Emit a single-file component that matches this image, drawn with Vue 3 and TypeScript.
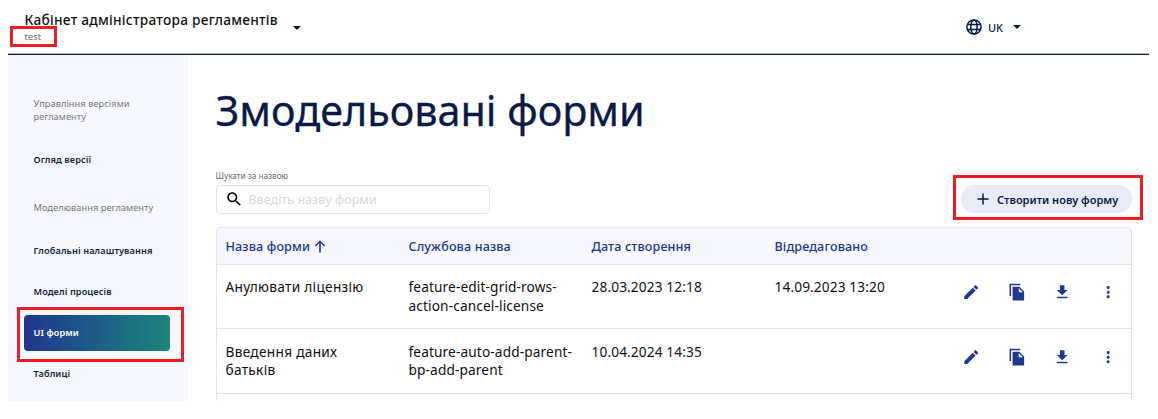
<script setup lang="ts">
interface NavItem {
  label: string
  kind: 'caption' | 'link' | 'active'
  key: string
}

interface FormRow {
  title: string
  name: string
  created: string
  edited: string
}

const nav: NavItem[] = [
  { label: 'Управління версіями регламенту', kind: 'caption', key: 'versions' },
  { label: 'Огляд версії', kind: 'link', key: 'overview' },
  { label: 'Моделювання регламенту', kind: 'caption', key: 'modeling' },
  { label: 'Глобальні налаштування', kind: 'link', key: 'settings' },
  { label: 'Моделі процесів', kind: 'link', key: 'processes' },
  { label: 'UI форми', kind: 'active', key: 'forms' },
  { label: 'Таблиці', kind: 'link', key: 'tables' },
]

const columns: string[] = ['Назва форми', 'Службова назва', 'Дата створення', 'Відредаговано']

const rows: FormRow[] = [
  {
    title: 'Анулювати ліцензію',
    name: 'feature-edit-grid-rows-action-cancel-license',
    created: '28.03.2023 12:18',
    edited: '14.09.2023 13:20',
  },
  {
    title: 'Введення даних батьків',
    name: 'feature-auto-add-parent-bp-add-parent',
    created: '10.04.2024 14:35',
    edited: '',
  },
]

const actions: { id: string; path: string }[] = [
  {
    id: 'edit',
    path: 'M3 17.25V21h3.75L17.81 9.94l-3.75-3.75L3 17.25zM20.71 7.04c.39-.39.39-1.02 0-1.41l-2.34-2.34c-.39-.39-1.02-.39-1.41 0l-1.83 1.83 3.75 3.75 1.83-1.83z',
  },
  {
    id: 'copy',
    path: 'M16 1H2v16h2V3h12V1zm-1 4l6 6v12H6V5h9zm-1 7h5.5L14 6.5V12z',
  },
  { id: 'download', path: 'M19 9h-4V3H9v6H5l7 7 7-7zM5 18v2h14v-2H5z' },
  {
    id: 'more',
    path: 'M12 8c1.1 0 2-.9 2-2s-.9-2-2-2-2 .9-2 2 .9 2 2 2zm0 2c-1.1 0-2 .9-2 2s.9 2 2 2 2-.9 2-2-.9-2-2-2zm0 6c-1.1 0-2 .9-2 2s.9 2 2 2 2-.9 2-2-.9-2-2-2z',
  },
]
</script>

<template>
  <div class="page">
    <header class="top">
      <div class="brand">
        <div class="brand-title">Кабінет адміністратора регламентів</div>
        <div class="brand-sub">test<span class="mark mark-test"></span></div>
      </div>
      <svg class="caret" viewBox="0 0 8 4"><path d="M0 0h8L4 4z" /></svg>
      <div class="lang">
        <svg class="globe" viewBox="0 0 16 16">
          <circle cx="8" cy="8" r="7.1" />
          <ellipse cx="8" cy="8" rx="3.2" ry="7.1" />
          <path d="M1.5 5.6h13M1.5 10.4h13" />
        </svg>
        <span>UK</span>
        <svg class="caret lang-caret" viewBox="0 0 8 4"><path d="M0 0h8L4 4z" /></svg>
      </div>
    </header>

    <div class="body">
      <nav class="side">
        <div v-for="item in nav" :key="item.key" :class="['nav', item.kind, 'nav-' + item.key]">
          {{ item.label }}<span v-if="item.kind === 'active'" class="mark mark-nav"></span>
        </div>
      </nav>

      <main class="main">
        <h1>Змодельовані форми</h1>
        <div class="tools">
          <div class="search">
            <div class="search-label">Шукати за назвою</div>
            <div class="search-box">
              <svg class="icon" viewBox="0 0 24 24">
                <path d="M15.5 14h-.79l-.28-.27C15.41 12.59 16 11.11 16 9.5 16 5.91 13.09 3 9.5 3S3 5.91 3 9.5 5.91 16 9.5 16c1.61 0 3.09-.59 4.23-1.57l.27.28v.79l5 4.99L20.49 19l-4.99-5zm-6 0C7.01 14 5 11.99 5 9.5S7.01 5 9.5 5 14 7.01 14 9.5 11.99 14 9.5 14z" />
              </svg>
              <span>Введіть назву форми</span>
            </div>
          </div>
          <div class="create">
            <svg viewBox="0 0 12 12"><path d="M6 .5v11M.5 6h11" /></svg>
            <span>Створити нову форму</span>
            <span class="mark mark-create"></span>
          </div>
        </div>

        <div class="table">
          <div class="row head">
            <div v-for="(column, i) in columns" :key="column" class="cell">
              <span>{{ column }}</span>
              <svg v-if="i === 0" class="sort" viewBox="0 0 12 13"><path d="M6 12.5V1.4M1.3 6L6 1.3 10.7 6" /></svg>
            </div>
          </div>
          <div v-for="row in rows" :key="row.name" class="row item">
            <div class="cell title">{{ row.title }}</div>
            <div class="cell">{{ row.name }}</div>
            <div class="cell">{{ row.created }}</div>
            <div class="cell">{{ row.edited }}</div>
            <div class="actions">
              <svg v-for="action in actions" :key="action.id" class="icon" viewBox="0 0 24 24">
                <path fill-rule="evenodd" :d="action.path" />
              </svg>
            </div>
          </div>
        </div>
      </main>
    </div>
  </div>
</template>

<style>
body {
  background: #fff;
  overflow: hidden;
}
</style>

<style scoped>
.page {
  box-sizing: border-box;
  width: 1141px;
  height: 401px;
  margin-left: 8px;
  overflow: hidden;
  display: flex;
  flex-direction: column;
  font-family: 'Noto Sans', 'Open Sans', sans-serif;
  color: #111;
}
.top {
  box-sizing: border-box;
  flex: none;
  height: 55px;
  border-bottom: 1px solid #0a1a45;
  box-shadow: inset 0 -1px #b5b9cc;
  display: flex;
  padding-left: 16.5px;
}
.brand {
  width: 253px;
  white-space: nowrap;
}
.brand-title {
  margin-top: 10px;
  font-size: 13.7px;
  font-weight: 500;
  line-height: 20px;
  letter-spacing: 0.26px;
}
.brand-sub {
  position: relative;
  font-size: 9.2px;
  line-height: 14px;
  color: #6b6b6b;
  letter-spacing: 0.15px;
}
.caret {
  width: 8px;
  height: 4px;
  margin: 25.5px 0 0 15px;
  fill: #111;
}
.lang {
  display: flex;
  align-items: center;
  height: 54px;
  margin-left: 665.5px;
  font-size: 11px;
  font-weight: 500;
  color: #0a1a45;
}
.lang span {
  margin-left: 6px;
}
.globe {
  width: 16px;
  height: 16px;
  fill: none;
  stroke: #0a1a45;
  stroke-width: 1.5;
}
.lang-caret {
  margin: 0 0 0 10px;
  fill: #0a1a45;
}
.mark {
  position: absolute;
  box-sizing: border-box;
  border: 3px solid #ee1c24;
}
.mark-test {
  left: -14.5px;
  top: -4px;
  width: 47px;
  height: 21px;
}
.mark-nav {
  left: -7px;
  top: -8px;
  width: 167px;
  height: 55px;
}
.mark-create {
  left: -8px;
  top: -10px;
  width: 190px;
  height: 45px;
}
.body {
  flex: 1;
  display: flex;
  min-height: 0;
}
.side {
  flex: none;
  box-sizing: border-box;
  width: 180px;
  padding: 42px 16px 0;
  background: #f6f8fd;
}
.nav {
  box-sizing: border-box;
  padding: 0 9.5px;
  font-size: 9.2px;
  line-height: 13.3px;
  letter-spacing: 0.1px;
  white-space: nowrap;
}
.caption {
  color: #777;
  letter-spacing: 0.08px;
}
.link {
  font-weight: 600;
  color: #17233f;
}
.nav-versions {
  white-space: normal;
  padding-right: 30px;
}
.nav-overview {
  margin-top: 29px;
}
.nav-modeling {
  margin-top: 35.5px;
}
.nav-settings {
  margin-top: 29.5px;
}
.nav-processes {
  margin-top: 27.7px;
}
.active {
  position: relative;
  width: 146px;
  height: 36px;
  margin-top: 16.5px;
  border-radius: 4px;
  line-height: 36px;
  font-weight: 600;
  color: #fff;
  background: linear-gradient(90deg, #203690, #1b857c);
}
.nav-tables {
  margin-top: 16.5px;
}
.main {
  width: 916.5px;
  margin-left: 27.5px;
}
h1 {
  margin: 23.5px 0 0;
  height: 63.5px;
  font-size: 41.3px;
  line-height: 62px;
  font-weight: 400;
  -webkit-text-stroke: 0.3px #0a1a45;
  color: #0a1a45;
  white-space: nowrap;
}
.tools {
  display: flex;
  justify-content: space-between;
  margin-top: 27px;
}
.search {
  width: 274.5px;
}
.search-label {
  font-size: 8.2px;
  line-height: 13px;
  color: #6b6b6b;
}
.search-box {
  box-sizing: border-box;
  display: flex;
  align-items: center;
  height: 29px;
  margin-top: 3px;
  padding-left: 8.5px;
  border: 1px solid #e2e4f2;
  border-radius: 4px;
  font-size: 12.6px;
  color: #d8d8d8;
}
.search-box span {
  margin: 0 0 0 5px;
}
.icon {
  width: 18.4px;
  height: 18.4px;
  flex: none;
}
.create {
  position: relative;
  box-sizing: border-box;
  display: flex;
  align-items: center;
  width: 171px;
  height: 28px;
  margin-top: 16px;
  padding-left: 16px;
  border-radius: 14px;
  background: #e9ebf7;
  font-size: 11px;
  font-weight: 600;
  color: #0a1a45;
  white-space: nowrap;
}
.create svg {
  width: 12px;
  height: 12px;
  margin-right: 8px;
  fill: none;
  stroke: #0a1a45;
  stroke-width: 1.5;
}
.table {
  box-sizing: border-box;
  height: 190px;
  margin-top: 12.5px;
  border: 1px solid #e2e4f2;
  border-radius: 4px 4px 0 0;
}
.row {
  box-sizing: border-box;
  display: grid;
  grid-template-columns: repeat(4, 183px) 1fr;
  border-bottom: 1px solid #e2e4f2;
}
.cell {
  box-sizing: border-box;
  padding: 0 9px;
}
.head {
  height: 37.5px;
  padding-top: 1px;
  align-items: center;
  border-radius: 4px 4px 0 0;
  background: #f6f8fd;
  font-size: 12.6px;
  font-weight: 500;
  color: #203690;
  letter-spacing: 0.12px;
}
.head .cell {
  display: flex;
  align-items: center;
}
.sort {
  width: 12px;
  height: 13px;
  margin-left: 4px;
  fill: none;
  stroke: #203690;
  stroke-width: 1.6;
}
.item {
  height: 64.3px;
  padding-top: 13.4px;
  font-size: 13.7px;
  line-height: 18.3px;
  letter-spacing: 0.12px;
}
.title {
  padding-right: 24px;
  letter-spacing: 0.28px;
}
.actions {
  display: flex;
  gap: 27.3px;
  padding: 5px 0 0 13.5px;
  fill: #203690;
}
</style>
